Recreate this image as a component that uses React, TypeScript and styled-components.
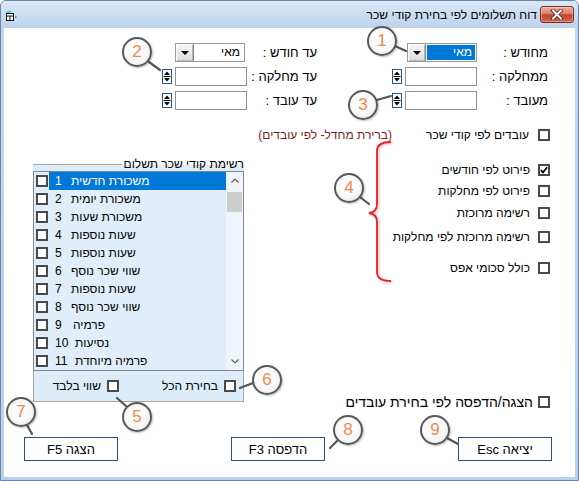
import React from "react";
import styled, { createGlobalStyle } from "styled-components";

const GlobalStyle = createGlobalStyle`
  html, body { margin: 0; padding: 0; background: #ffffff; }
  body { font-family: "Liberation Sans", Arial, sans-serif; }
  *, *::before, *::after { box-sizing: border-box; }
`;

const Window = styled.div`
  position: relative;
  width: 579px;
  height: 481px;
  display: flex;
  flex-direction: column;
  border: 1px solid #6a86aa;
  border-radius: 6px 6px 0 0;
  background: linear-gradient(180deg, #c4d8ee 0%, #b9d1ea 100%);
  overflow: hidden;
  font-family: "Liberation Sans", Arial, sans-serif;
  font-size: 12px;
  color: #000;
`;

const TitleBar = styled.div`
  height: 27px;
  flex: none;
  display: flex;
  align-items: center;
  padding: 0 4px;
  background: linear-gradient(180deg, #dce8f6 0%, #c9dcf0 55%, #bdd3eb 100%);
`;

const TitleIcon = styled.svg`
  flex: none;
  margin-top: 3px;
`;

const TitleText = styled.div`
  flex: 1;
  direction: rtl;
  text-align: right;
  padding-right: 3px;
  font-size: 12px;
  white-space: nowrap;
  color: #000;
`;

const CloseButton = styled.div`
  flex: none;
  width: 34px;
  height: 17px;
  border: 1px solid #7b2a20;
  border-radius: 3px;
  background: linear-gradient(180deg, #eab0a3 0%, #dc7d6a 45%, #c5432d 52%, #d2634f 100%);
  display: flex;
  align-items: center;
  justify-content: center;
  box-shadow: inset 0 0 0 1px rgba(255, 255, 255, 0.35);
`;

const Content = styled.div`
  flex: 1;
  margin: 0 3px 3px 3px;
  background: #ffffff;
  direction: rtl;
  display: flex;
  flex-direction: column;
`;

const TopFields = styled.div`
  margin-top: 15px;
  padding-right: 27px;
  display: grid;
  grid-template-columns: 71px 72px 13px 75px 70px 72px 13px;
  grid-auto-rows: 19px;
  row-gap: 5px;
  align-items: center;
`;

const FieldLabel = styled.div<{ $col: number }>`
  grid-column: ${(p) => p.$col};
  white-space: nowrap;
  line-height: 15px;
  font-size: 13px;
`;

const TextInput = styled.div<{ $col: number }>`
  grid-column: ${(p) => p.$col};
  width: 72px;
  height: 19px;
  border: 1px solid #8f8f8f;
  background: #fff;
`;

const SpinSlot = styled.div<{ $col: number }>`
  grid-column: ${(p) => p.$col};
  justify-self: end;
  display: flex;
  align-items: center;
`;

const Combo = styled.div<{ $col: number }>`
  grid-column: ${(p) => p.$col};
  justify-self: ${(p) => (p.$col === 2 ? "start" : "end")};
  width: 70px;
  height: 19px;
  display: flex;
  direction: ltr;
  border: 1px solid #9a9a9a;
  background: #fff;
`;

const ComboButton = styled.div`
  flex: none;
  width: 18px;
  height: 100%;
  background: linear-gradient(180deg, #f4f4f4, #dedede);
  border-right: 1px solid #8a8a8a;
  box-shadow: inset 1px 1px 0 #ffffff, inset -1px -1px 0 #b5b5b5;
  display: flex;
  align-items: center;
  justify-content: center;
`;

const ComboValue = styled.div<{ $selected?: boolean }>`
  flex: 1;
  margin: 1px;
  direction: rtl;
  text-align: right;
  padding-right: 3px;
  line-height: 15px;
  background: ${(p) => (p.$selected ? "#0078d7" : "transparent")};
  color: ${(p) => (p.$selected ? "#ffffff" : "#000000")};
`;

const Middle = styled.div`
  display: flex;
  align-items: flex-start;
  margin-top: 17px;
`;

const OptionsCol = styled.div`
  flex: 1;
  display: flex;
  flex-direction: column;
  align-items: flex-start;
  padding-right: 25px;
`;

const OptionLine = styled.div`
  display: flex;
  align-items: center;
  height: 16px;
`;

const CheckRow = styled.div<{ $mt?: number; $w?: number; $gap?: number; $size?: number }>`
  display: flex;
  align-items: center;
  gap: ${(p) => p.$gap ?? 6}px;
  height: 16px;
  margin-top: ${(p) => p.$mt ?? 0}px;
  font-size: ${(p) => p.$size ?? 12}px;
  white-space: nowrap;
  ${(p) => (p.$w ? `width: ${p.$w}px; flex: none;` : "")}
`;

const Box = styled.span`
  flex: none;
  width: 12px;
  height: 12px;
  border: 2px solid #4a4a4a;
  background: #fff;
  display: inline-flex;
  align-items: center;
  justify-content: center;
`;

const Note = styled.span`
  color: #7d1b1b;
  white-space: nowrap;
`;

const GroupBox = styled.div`
  flex: none;
  width: 211px;
  margin-top: 31px;
  margin-left: 29px;
  display: flex;
  flex-direction: column;
`;

const GroupHeader = styled.div`
  height: 13px;
  display: flex;
  align-items: stretch;
`;

const Legend = styled.span`
  white-space: nowrap;
  line-height: 13px;
  padding-left: 2px;
  background: linear-gradient(180deg, #ffffff 0 7px, #dcecf9 7px);
`;

const HeaderLine = styled.span`
  flex: 1;
  background: linear-gradient(180deg, transparent 0 6px, #a7a7a7 6px 7px, #dcecf9 7px);
`;

const GroupBody = styled.div`
  height: 231px;
  background: #dcecf9;
  border: 1px solid #a7a7a7;
  border-top: none;
  display: flex;
  flex-direction: column;
`;

const ListBox = styled.div`
  margin: 0 -1px;
  height: 200px;
  flex: none;
  border: 1px solid #828790;
  background: #dfeefa;
  display: flex;
  direction: ltr;
`;

const Rows = styled.div`
  flex: 1;
  display: flex;
  flex-direction: column;
`;

const ListRow = styled.div`
  height: 18px;
  display: flex;
  align-items: center;
`;

const RowBox = styled(Box)`
  margin-left: 2px;
`;

const RowBody = styled.div<{ $selected?: boolean }>`
  flex: 1;
  height: 18px;
  display: flex;
  align-items: center;
  padding-left: 6px;
  margin-left: 1px;
  background: ${(p) => (p.$selected ? "#0078d7" : "transparent")};
  color: ${(p) => (p.$selected ? "#ffffff" : "#000000")};
  white-space: nowrap;
`;

const RowNum = styled.span`
  display: inline-block;
  width: 16px;
`;

const RowName = styled.span<{ $shift: number }>`
  margin-left: ${(p) => p.$shift}px;
`;

const ScrollBar = styled.div`
  flex: none;
  width: 17px;
  display: flex;
  flex-direction: column;
  background: #eef4fa;
`;

const ScrollArrow = styled.div`
  height: 17px;
  display: flex;
  align-items: center;
  justify-content: center;
`;

const ScrollTrack = styled.div`
  flex: 1;
  display: flex;
  justify-content: center;
`;

const ScrollThumb = styled.div`
  width: 15px;
  height: 20px;
  margin-top: 3px;
  background: #cdcdcd;
`;

const GroupFooter = styled.div`
  flex: 1;
  display: flex;
  align-items: center;
  padding-right: 7px;
`;

const ButtonRow = styled.div`
  display: flex;
  direction: ltr;
  margin-top: 27px;
  padding-left: 20px;
`;

const PushButton = styled.div<{ $ml: number }>`
  width: 94px;
  height: 24px;
  margin-left: ${(p) => p.$ml}px;
  border: 1px solid #2c4f80;
  background: #ffffff;
  direction: rtl;
  display: flex;
  align-items: center;
  justify-content: center;
  white-space: nowrap;
  font-size: 13px;
`;

const Callout = styled.div<{ $x: number; $y: number }>`
  position: absolute;
  left: ${(p) => p.$x - 16}px;
  top: ${(p) => p.$y - 16}px;
  width: 30px;
  height: 30px;
  border-radius: 50%;
  border: 2px solid #585858;
  background: radial-gradient(circle at 45% 40%, #ffffff 0%, #f8f8f8 55%, #e4e4e4 100%);
  box-shadow: 1px 1px 2px rgba(0, 0, 0, 0.25);
  display: flex;
  align-items: center;
  justify-content: center;
  color: #ee8b4c;
  font-size: 17px;
  font-family: "Liberation Sans", Arial, sans-serif;
  direction: ltr;
`;

const Overlay = styled.svg`
  position: absolute;
  left: -1px;
  top: -1px;
  pointer-events: none;
`;

const Check = ({ checked }: { checked?: boolean }) => (
  <Box>
    {checked && (
      <svg width="8" height="8" viewBox="0 0 8 8">
        <path d="M0.8 4.2 L3 6.4 L7.2 1.2" fill="none" stroke="#000" strokeWidth="1.7" />
      </svg>
    )}
  </Box>
);

const Spin = () => (
  <svg width="10" height="15" viewBox="0 0 10 15">
    <rect x="0.5" y="0.5" width="9" height="14" fill="#fff" stroke="#1f56a5" />
    <path d="M2 6 L5 2.5 L8 6 Z" fill="#000" />
    <line x1="1.5" y1="7.5" x2="8.5" y2="7.5" stroke="#000" />
    <path d="M2 9 L5 12.5 L8 9 Z" fill="#000" />
  </svg>
);

const ComboArrow = () => (
  <svg width="8" height="4" viewBox="0 0 8 4">
    <path d="M0 0 L8 0 L4 4 Z" fill="#000" />
  </svg>
);

const Chevron = ({ up }: { up?: boolean }) => (
  <svg width="8" height="5" viewBox="0 0 8 5">
    <path d={up ? "M0.5 4.5 L4 1 L7.5 4.5" : "M0.5 0.5 L4 4 L7.5 0.5"} fill="none" stroke="#606060" strokeWidth="1.2" />
  </svg>
);

const items: { n: number; name: string; shift: number }[] = [
  { n: 1, name: "משכורת חדשית", shift: 0 },
  { n: 2, name: "משכורת יומית", shift: 0 },
  { n: 3, name: "משכורת שעות", shift: 0 },
  { n: 4, name: "שעות נוספות", shift: 0 },
  { n: 5, name: "שעות נוספות", shift: 0 },
  { n: 6, name: "שווי שכר נוסף", shift: 0 },
  { n: 7, name: "שעות נוספות", shift: 0 },
  { n: 8, name: "שווי שכר נוסף", shift: 0 },
  { n: 9, name: "פרמיה", shift: 2 },
  { n: 10, name: "נסיעות", shift: 4 },
  { n: 11, name: "פרמיה מיוחדת", shift: 4 },
];

const callouts = [
  { n: 1, x: 382, y: 41 },
  { n: 2, x: 137, y: 52 },
  { n: 3, x: 363, y: 105 },
  { n: 4, x: 349, y: 188 },
  { n: 5, x: 137, y: 417 },
  { n: 6, x: 267, y: 380 },
  { n: 7, x: 21, y: 412 },
  { n: 8, x: 348, y: 430 },
  { n: 9, x: 435, y: 430 },
];

const tails: [number, number, number, number][] = [
  [395, 46, 406, 51],
  [149, 62, 160, 70],
  [377, 100, 391, 96],
  [360, 197, 369, 204],
  [127, 407, 117, 398],
  [253, 383, 240, 388],
  [27, 425, 32, 434],
  [337, 441, 330, 448],
  [447, 438, 458, 444],
];

export default function App() {
  return (
    <>
      <GlobalStyle />
      <Window>
        <TitleBar>
          <TitleIcon width="12" height="12" viewBox="0 0 12 12">
            <path d="M1 2.5 L6 1.2" stroke="#35c9d8" strokeWidth="1.4" />
            <rect x="1.5" y="3.5" width="7" height="7" fill="#fff" stroke="#111" />
            <line x1="1.5" y1="6" x2="8.5" y2="6" stroke="#111" />
            <line x1="5" y1="6" x2="5" y2="10.5" stroke="#111" />
            <rect x="10" y="6" width="1.5" height="2" fill="#8a8a8a" />
          </TitleIcon>
          <TitleText>דוח תשלומים לפי בחירת קודי שכר</TitleText>
          <CloseButton>
            <svg width="14" height="11" viewBox="0 0 14 11">
              <path d="M3 1.5 L11 9.5 M11 1.5 L3 9.5" stroke="#5a1a12" strokeWidth="3.6" strokeLinecap="square" />
              <path d="M3 1.5 L11 9.5 M11 1.5 L3 9.5" stroke="#ffffff" strokeWidth="2" strokeLinecap="square" />
            </svg>
          </CloseButton>
        </TitleBar>

        <Content>
          <TopFields>
            <FieldLabel $col={1}>מחודש :</FieldLabel>
            <Combo $col={2}>
              <ComboButton>
                <ComboArrow />
              </ComboButton>
              <ComboValue $selected>מאי</ComboValue>
            </Combo>
            <FieldLabel $col={5}>עד חודש :</FieldLabel>
            <Combo $col={6}>
              <ComboButton>
                <ComboArrow />
              </ComboButton>
              <ComboValue>מאי</ComboValue>
            </Combo>

            <FieldLabel $col={1}>ממחלקה :</FieldLabel>
            <TextInput $col={2} />
            <SpinSlot $col={3}>
              <Spin />
            </SpinSlot>
            <FieldLabel $col={5}>עד מחלקה :</FieldLabel>
            <TextInput $col={6} />
            <SpinSlot $col={7}>
              <Spin />
            </SpinSlot>

            <FieldLabel $col={1}>מעובד :</FieldLabel>
            <TextInput $col={2} />
            <SpinSlot $col={3}>
              <Spin />
            </SpinSlot>
            <FieldLabel $col={5}>עד עובד :</FieldLabel>
            <TextInput $col={6} />
            <SpinSlot $col={7}>
              <Spin />
            </SpinSlot>
          </TopFields>

          <Middle>
            <OptionsCol>
              <OptionLine>
                <CheckRow $w={158} $gap={9}>
                  <Check />
                  <span>עובדים לפי קודי שכר</span>
                </CheckRow>
                <Note>(ברירת מחדל- לפי עובדים)</Note>
              </OptionLine>
              <CheckRow $mt={19} $gap={8}>
                <Check checked />
                <span>פירוט לפי חודשים</span>
              </CheckRow>
              <CheckRow $mt={5} $gap={8}>
                <Check />
                <span>פירוט לפי מחלקות</span>
              </CheckRow>
              <CheckRow $mt={6} $gap={8}>
                <Check />
                <span>רשימה מרוכזת</span>
              </CheckRow>
              <CheckRow $mt={8} $gap={8}>
                <Check />
                <span>רשימה מרוכזת לפי מחלקות</span>
              </CheckRow>
              <CheckRow $mt={15} $gap={8}>
                <Check />
                <span>כולל סכומי אפס</span>
              </CheckRow>
              <CheckRow $mt={118} $gap={5} $size={14}>
                <Check />
                <span>הצגה/הדפסה לפי בחירת עובדים</span>
              </CheckRow>
            </OptionsCol>

            <GroupBox>
              <GroupHeader>
                <Legend>רשימת קודי שכר תשלום</Legend>
                <HeaderLine />
              </GroupHeader>
              <GroupBody>
                <ListBox>
                  <Rows>
                    {items.map((it) => (
                      <ListRow key={it.n}>
                        <RowBox />
                        <RowBody $selected={it.n === 1}>
                          <RowNum>{it.n}</RowNum>
                          <RowName $shift={it.shift}>{it.name}</RowName>
                        </RowBody>
                      </ListRow>
                    ))}
                  </Rows>
                  <ScrollBar>
                    <ScrollArrow>
                      <Chevron up />
                    </ScrollArrow>
                    <ScrollTrack>
                      <ScrollThumb />
                    </ScrollTrack>
                    <ScrollArrow>
                      <Chevron />
                    </ScrollArrow>
                  </ScrollBar>
                </ListBox>
                <GroupFooter>
                  <CheckRow $w={117}>
                    <Check />
                    <span>בחירת הכל</span>
                  </CheckRow>
                  <CheckRow>
                    <Check />
                    <span>שווי בלבד</span>
                  </CheckRow>
                </GroupFooter>
              </GroupBody>
            </GroupBox>
          </Middle>

          <ButtonRow>
            <PushButton $ml={0}>הצגה F5</PushButton>
            <PushButton $ml={113}>הדפסה F3</PushButton>
            <PushButton $ml={133}>יציאה Esc</PushButton>
          </ButtonRow>
        </Content>

        <Overlay width="579" height="481" viewBox="0 0 579 481">
          <defs>
            <filter id="braceGlow" x="-50%" y="-10%" width="200%" height="120%">
              <feDropShadow dx="1" dy="1" stdDeviation="1.2" floodColor="#e02020" floodOpacity="0.35" />
            </filter>
          </defs>
          <path
            d="M391 142 Q377 142 377 151 L377 204 Q377 212 369 213 Q377 214 377 222 L377 272 Q377 281 391 281"
            fill="none"
            stroke="#e4242a"
            strokeWidth="1.8"
            filter="url(#braceGlow)"
          />
          {tails.map(([x1, y1, x2, y2], i) => (
            <line key={i} x1={x1} y1={y1} x2={x2} y2={y2} stroke="#555" strokeWidth="2.2" strokeLinecap="round" />
          ))}
        </Overlay>
        {callouts.map((c) => (
          <Callout key={c.n} $x={c.x} $y={c.y}>
            {c.n}
          </Callout>
        ))}
      </Window>
    </>
  );
}
